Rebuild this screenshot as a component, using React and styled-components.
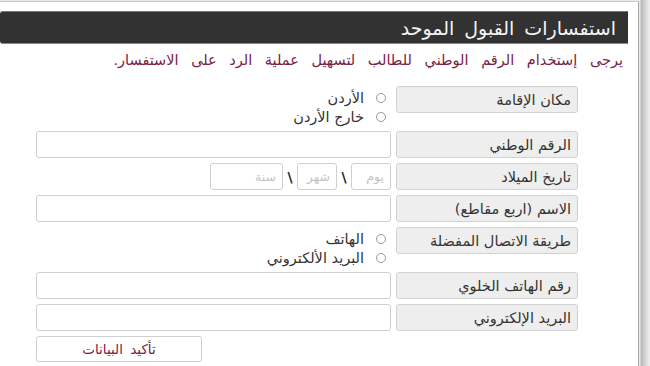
import React from "react";
import styled, { createGlobalStyle } from "styled-components";

const GlobalStyle = createGlobalStyle`
  html, body {
    margin: 0;
    padding: 0;
    background: #e9e9e9;
    font-family: "DejaVu Sans", "Noto Sans", sans-serif;
    overflow: hidden;
  }
`;

const Page = styled.div`
  width: 650px;
  height: 366px;
  padding-top: 1px;
  box-sizing: border-box;
  background: linear-gradient(to right, #e9e9e9 0, #e9e9e9 640px, #b8b8b8 641px, #f2f2f2 650px);
`;

const Panel = styled.div`
  width: 639px;
  height: 365px;
  box-sizing: border-box;
  background: #fff;
  border-top: 1px solid #c8c8c8;
  border-right: 1px solid #a8a8a8;
  padding: 9px 10px 0 0;
  direction: rtl;
`;

const Header = styled.div`
  height: 33px;
  background: #323232;
  border-radius: 3px 0 0 3px;
  border-top: 1px solid #777;
  border-bottom: 1px solid #888;
  box-sizing: border-box;
  display: flex;
  align-items: center;
  padding-right: 12px;
  color: #f4f4f4;
  font-size: 19px;
  word-spacing: 4px;
`;

const Notice = styled.p`
  margin: 6px 5px 0 0;
  color: #7a2144;
  font-size: 14.5px;
  word-spacing: 8px;
  line-height: 20px;
`;

const Form = styled.form`
  display: flex;
  flex-direction: column;
  gap: 5px;
  margin-top: 16px;
  padding: 0 50px 0 36px;
`;

const Row = styled.div`
  display: flex;
  align-items: flex-start;
  gap: 5px;
`;

const Label = styled.div`
  width: 182px;
  height: 27px;
  box-sizing: border-box;
  background: #eeeeee;
  border: 1px solid #d2d2d2;
  border-radius: 3px;
  display: flex;
  align-items: center;
  padding-right: 6px;
  color: #333;
  font-size: 14.5px;
  white-space: nowrap;
`;

const TextInput = styled.input`
  width: ${(p) => p.$w || 355}px;
  height: 27px;
  box-sizing: border-box;
  border: 1px solid #cfcfcf;
  border-radius: 3px;
  background: #fff;
  padding: 0 6px;
  font-family: inherit;
  font-size: 12.5px;
  direction: rtl;
  outline: none;
  &::placeholder {
    color: #c4c4c4;
  }
`;

const DateGroup = styled.div`
  display: flex;
  align-items: center;
  gap: 3px;
`;

const Slash = styled.span`
  color: #222;
  font-size: 14px;
  font-weight: bold;
  width: 8px;
  text-align: center;
`;

const RadioGroup = styled.div`
  display: flex;
  flex-direction: column;
  padding-top: 2px;
`;

const RadioLine = styled.label`
  display: flex;
  align-items: center;
  height: 19px;
  gap: 12px;
  padding-right: 5px;
  color: #333;
  font-size: 14.5px;
`;

const Dot = styled.span`
  width: 10px;
  height: 10px;
  border: 1px solid #9a9a9a;
  border-radius: 50%;
  box-sizing: border-box;
`;

const ButtonRow = styled.div`
  display: flex;
  justify-content: flex-end;
`;

const Button = styled.button`
  width: 166px;
  height: 26px;
  background: #fff;
  border: 1px solid #cfcfcf;
  border-radius: 3px;
  color: #7a2144;
  font-family: inherit;
  font-size: 13.5px;
  word-spacing: 3px;
  cursor: pointer;
`;

const Radios = ({ options }) => (
  <RadioGroup>
    {options.map((o) => (
      <RadioLine key={o}>
        <Dot />
        {o}
      </RadioLine>
    ))}
  </RadioGroup>
);

export default function App() {
  return (
    <Page>
      <GlobalStyle />
      <Panel>
        <Header>استفسارات القبول الموحد</Header>
        <Notice>يرجى إستخدام الرقم الوطني للطالب لتسهيل عملية الرد على الاستفسار.</Notice>
        <Form onSubmit={(e) => e.preventDefault()}>
          <Row>
            <Label>مكان الإقامة</Label>
            <Radios options={["الأردن", "خارج الأردن"]} />
          </Row>
          <Row>
            <Label>الرقم الوطني</Label>
            <TextInput />
          </Row>
          <Row>
            <Label>تاريخ الميلاد</Label>
            <DateGroup>
              <TextInput $w={40} placeholder="يوم" />
              <Slash>\</Slash>
              <TextInput $w={40} placeholder="شهر" />
              <Slash>\</Slash>
              <TextInput $w={73} placeholder="سنة" />
            </DateGroup>
          </Row>
          <Row>
            <Label>الاسم (اربع مقاطع)</Label>
            <TextInput />
          </Row>
          <Row>
            <Label>طريقة الاتصال المفضلة</Label>
            <Radios options={["الهاتف", "البريد الألكتروني"]} />
          </Row>
          <Row>
            <Label>رقم الهاتف الخلوي</Label>
            <TextInput />
          </Row>
          <Row>
            <Label>البريد الإلكتروني</Label>
            <TextInput />
          </Row>
          <ButtonRow>
            <Button type="submit">تأكيد البيانات</Button>
          </ButtonRow>
        </Form>
      </Panel>
    </Page>
  );
}
